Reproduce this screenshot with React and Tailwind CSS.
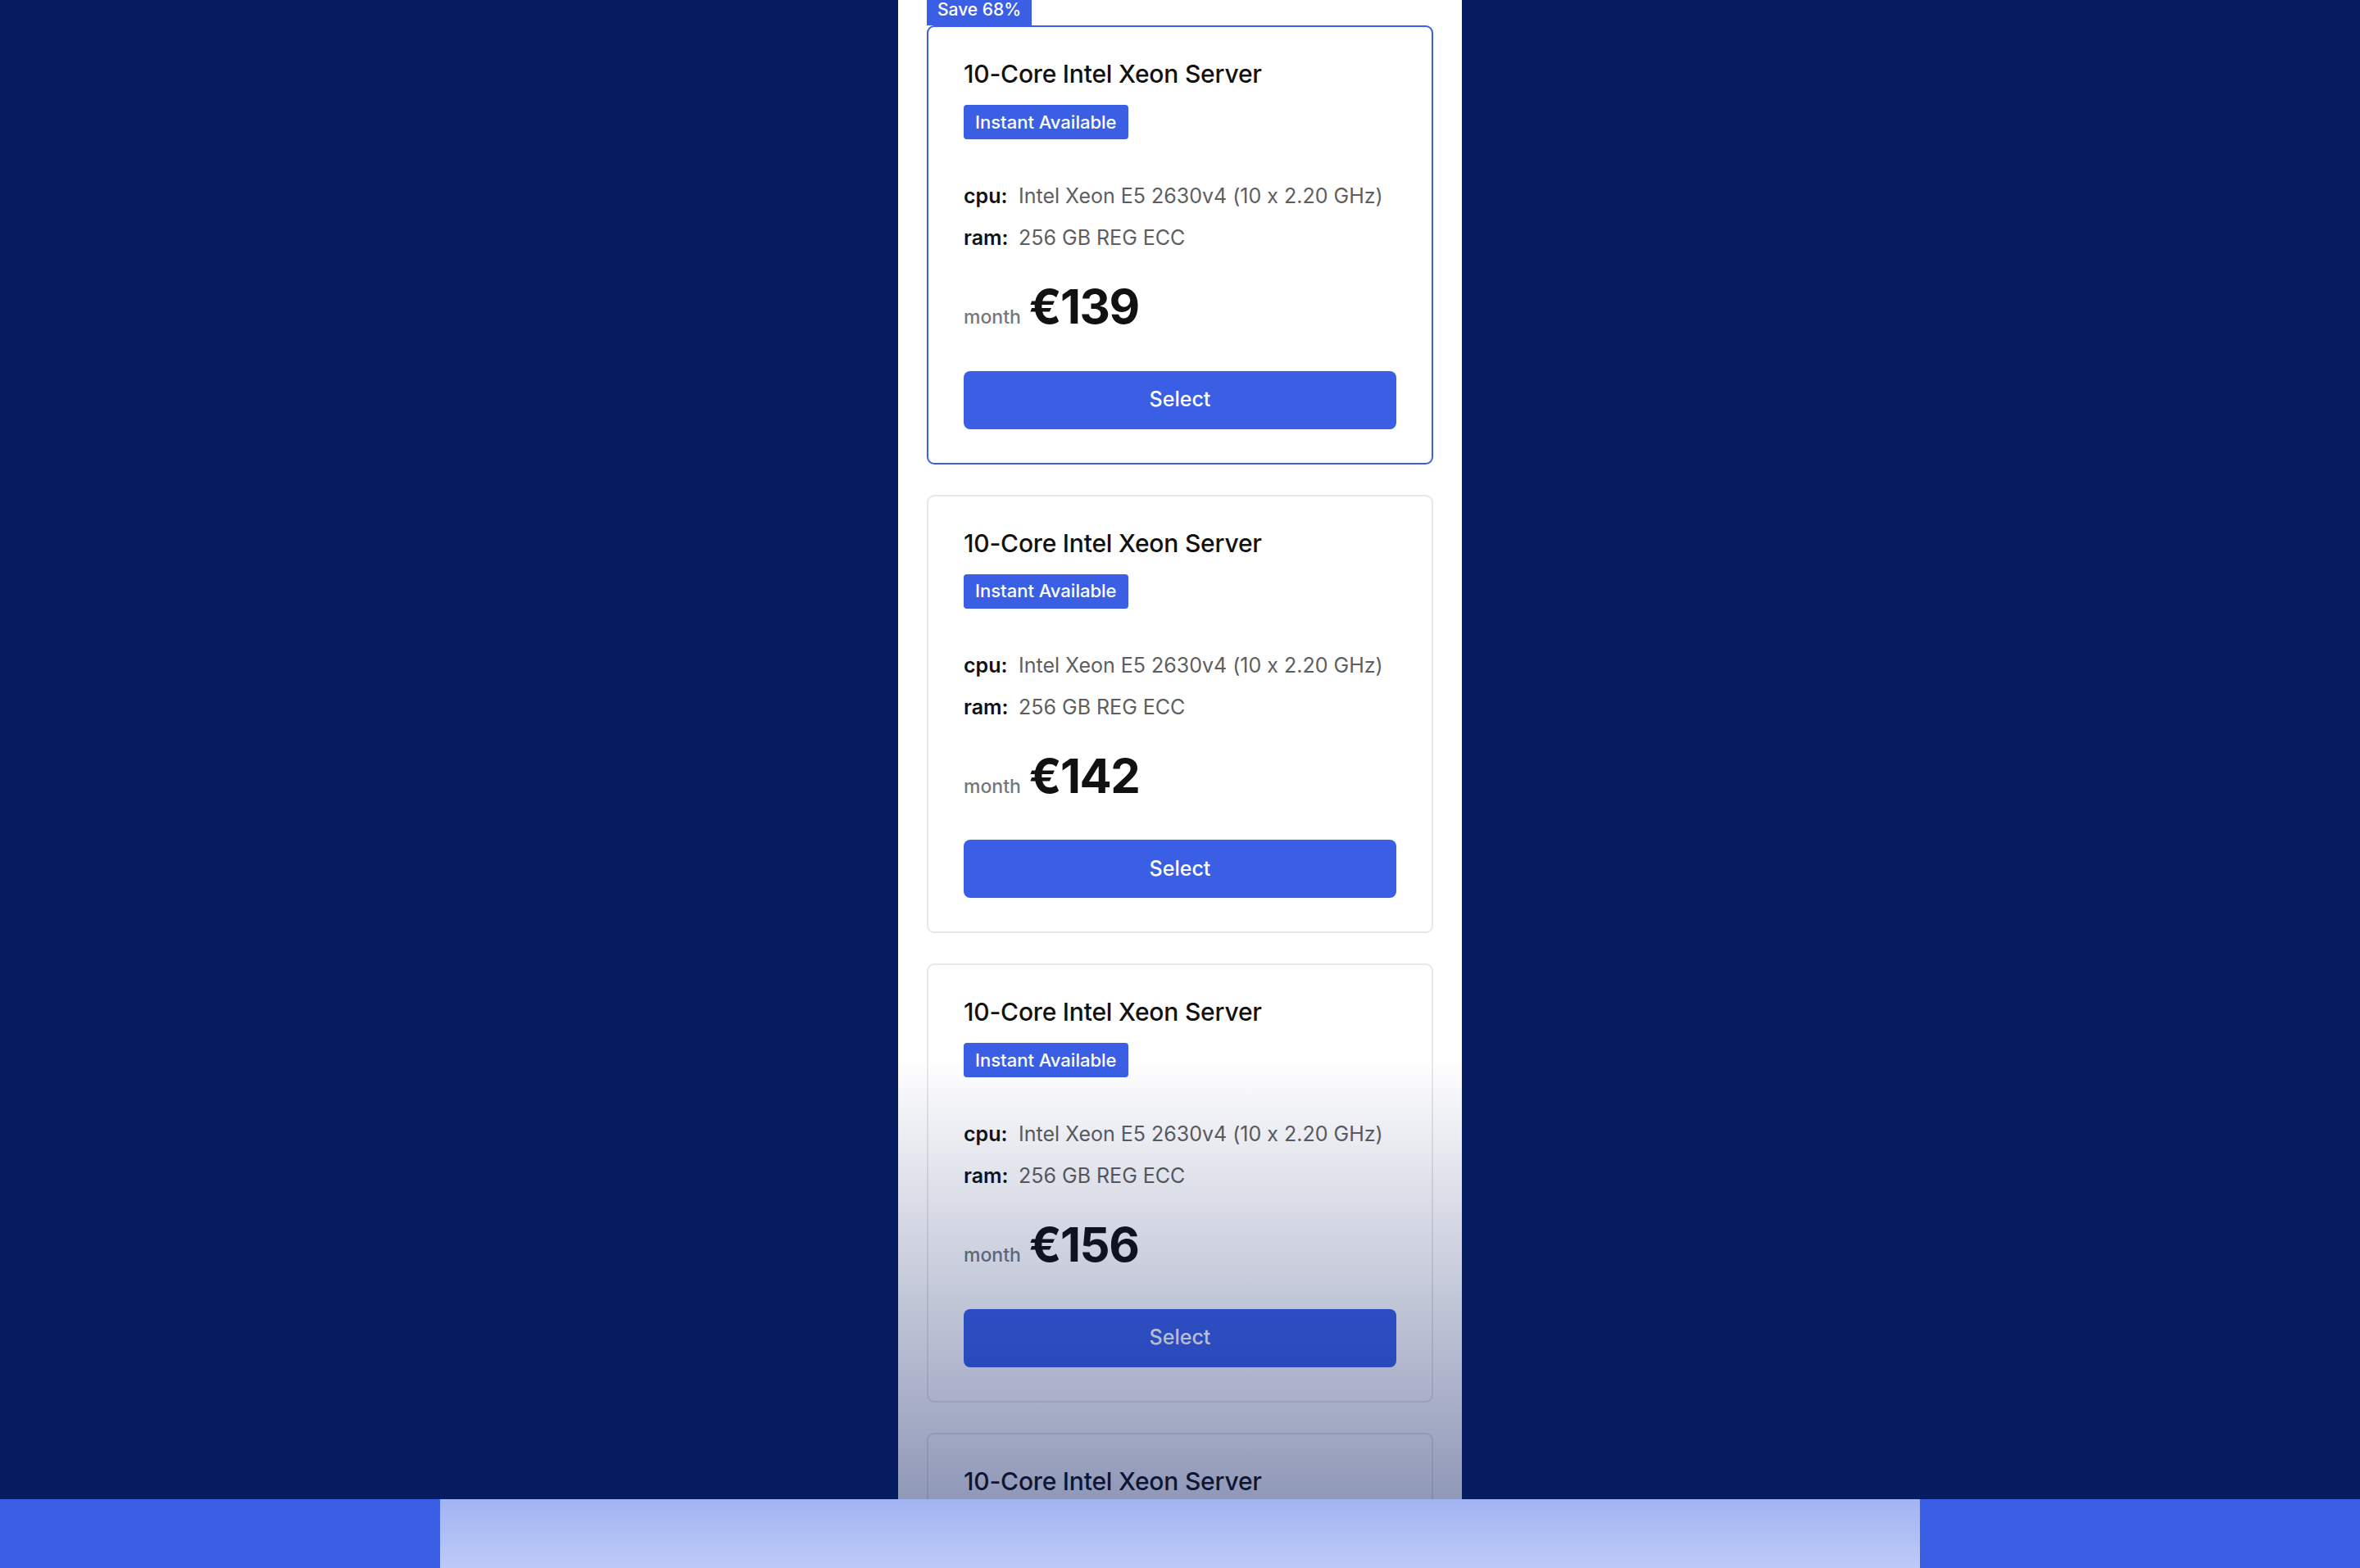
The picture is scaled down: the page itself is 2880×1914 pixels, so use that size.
import React from 'react';

const plans = [
  { price: 139, featured: true, save: 'Save 68%' },
  { price: 142 },
  { price: 156 },
  { price: 159 },
];

function PlanCard({ price, featured, save }) {
  return (
    <div className="flex flex-col">
      {save ? (
        <div className="h-[31px] w-fit bg-[#3a5fe5] px-[13px] text-[21px] font-medium leading-[24px] text-white">
          {save}
        </div>
      ) : null}
      <div
        className={
          featured
            ? 'rounded-[9px] border-2 border-[#3a5fe5] bg-white px-[43px] pt-[39px] pb-[41px]'
            : 'rounded-[9px] border-2 border-[#e8e8e8] bg-white px-[43px] pt-[39px] pb-[41px]'
        }
      >
        <h3 className="text-[30px] font-medium leading-[36px] tracking-[-0.2px] text-[#111111]">
          10-Core Intel Xeon Server
        </h3>
        <span className="mt-[20px] inline-flex h-[42px] items-center rounded-[4px] bg-[#3a5fe5] px-[14px] text-[22px] font-medium text-white">
          Instant Available
        </span>
        <div className="mt-[51px] flex flex-col gap-[15px] text-[25px] leading-[36px]">
          <div className="flex">
            <span className="w-[67px] font-semibold text-[#111111]">cpu:</span>
            <span className="text-[#5e5e5e]">Intel Xeon E5 2630v4 (10 x 2.20 GHz)</span>
          </div>
          <div className="flex">
            <span className="w-[67px] font-semibold text-[#111111]">ram:</span>
            <span className="text-[#5e5e5e]">256 GB REG ECC</span>
          </div>
        </div>
        <div className="mt-[38px] flex items-baseline gap-[10px]">
          <span className="text-[23px] font-medium text-[#777777]">month</span>
          <span className="text-[58px] font-bold leading-[56px] tracking-[-1.5px] text-[#111111]">€{price}</span>
        </div>
        <button
          type="button"
          className="mt-[48px] h-[71px] w-full rounded-[8px] bg-[#3a5fe5] text-[25px] font-medium text-white"
        >
          Select
        </button>
      </div>
    </div>
  );
}

export default function App() {
  return (
    <div
      className="relative h-[1914px] overflow-hidden bg-[#071b60] [font-feature-settings:'calt'_0]"
      style={{ fontFamily: 'Inter, "Noto Sans", sans-serif' }}
    >
      <div className="relative mx-auto h-full w-[688px] bg-white px-[35px]">
        <div className="flex flex-col gap-[37px]">
          {plans.map((p) => (
            <PlanCard key={p.price} {...p} />
          ))}
        </div>
        {/* fade over the lower part of the list */}
        <div className="pointer-events-none absolute inset-x-0 bottom-[84px] h-[540px] bg-gradient-to-b from-transparent to-[#071b60]/45" />
      </div>

      {/* bottom bar */}
      <div className="absolute inset-x-0 bottom-0 flex h-[84px]">
        <div className="w-[537px] bg-[#3a5fe5]" />
        <div className="flex-1 bg-gradient-to-b from-[#a2b3f2] to-[#bdcaf7]" />
        <div className="w-[537px] bg-[#3a5fe5]" />
      </div>
    </div>
  );
}
